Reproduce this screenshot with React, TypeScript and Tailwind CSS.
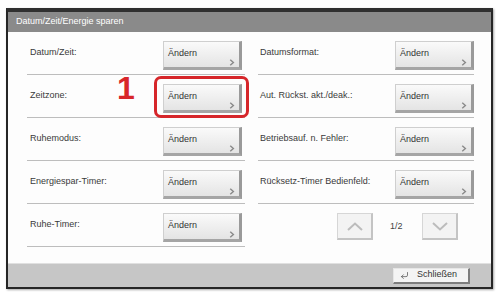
import { CornerDownLeft } from 'lucide-react';

const leftRows = ['Datum/Zeit:', 'Zeitzone:', 'Ruhemodus:', 'Energiespar-Timer:', 'Ruhe-Timer:'];
const rightRows = ['Datumsformat:', 'Aut. Rückst. akt./deak.:', 'Betriebsauf. n. Fehler:', 'Rücksetz-Timer Bedienfeld:'];

function ChangeButton() {
    return (
        <div className="flex h-[29px] w-[79px] flex-col justify-between border border-[#cfcfcf] border-r-[3px] border-b-[3px] border-r-[#9a9a9a] border-b-[#a5a5a5] bg-gradient-to-b from-[#fafafa] to-[#e4e4e4] pb-[1px] pl-[4px] pr-[3px] pt-[6px]">
            <span className="text-[9px] leading-[11px] text-[#333]">Ändern</span>
            <svg width="8" height="10" viewBox="0 0 8 10" className="self-end">
                <polyline points="1.5,1 6,5 1.5,9" fill="none" stroke="#8a8a8a" strokeWidth="2" />
            </svg>
        </div>
    );
}

function Row({ label, padLabel, btnMargin }: { label: string; padLabel: string; btnMargin: string }) {
    return (
        <div className="mb-[9px] flex h-[34px] items-start justify-between border-b border-[#bdbdbd]">
            <span className={`${padLabel} pt-[6px] text-[9px] leading-[11px] text-[#3a3a3a]`}>{label}</span>
            <div className={btnMargin}>
                <ChangeButton />
            </div>
        </div>
    );
}

function PageButton({ up }: { up: boolean }) {
    return (
        <div className="flex h-[27px] w-[36px] items-center justify-center border border-[#d6d6d6] border-b-2 border-r-2 border-b-[#c4c4c4] border-r-[#c4c4c4] bg-[#f3f3f3]">
            <svg width="16" height="9" viewBox="0 0 16 9">
                <polyline
                    points={up ? '1,8 8,1.5 15,8' : '1,1 8,7.5 15,1'}
                    fill="none"
                    stroke="#bcbcbc"
                    strokeWidth="2"
                />
            </svg>
        </div>
    );
}

export default function App() {
    return (
        <div className="relative h-[295px] w-[501px] bg-white pl-[6px] pt-[8px] font-['Liberation_Sans',Arial,sans-serif]">
            <div className="w-[487px] border-2 border-t-[4px] border-[#262626] border-t-[#303030] shadow-[1px_1px_2px_rgba(0,0,0,0.35)]">
                {/* title bar */}
                <div className="flex h-[20px] items-center bg-[#8a8a8a] pl-[8px] text-[9px] text-white">
                    Datum/Zeit/Energie sparen
                </div>

                {/* settings */}
                <div className="flex h-[231px] gap-[13px] bg-[#fdfdfd] pl-[19px] pr-[17px] pt-[9px]">
                    <div className="w-[218px]">
                        {leftRows.map((l) => (
                            <Row key={l} label={l} padLabel="pl-[3px]" btnMargin="mr-[3px]" />
                        ))}
                    </div>
                    <div className="w-[216px]">
                        {rightRows.map((l) => (
                            <Row key={l} label={l} padLabel="pl-[2px]" btnMargin="" />
                        ))}
                        <div className="ml-[79px] mt-[5px] flex items-center">
                            <PageButton up />
                            <span className="ml-[17px] w-[32px] text-[9px] text-[#444]">1/2</span>
                            <PageButton up={false} />
                        </div>
                    </div>
                </div>

                {/* footer */}
                <div className="flex h-[24px] items-center justify-end border-t border-[#e0e0e0] bg-[#c6c6c6] pr-[21px]">
                    <div className="flex h-[16px] w-[77px] items-center border border-[#e6e6e6] border-b-2 border-r-2 border-b-[#7d7d7d] border-r-[#7d7d7d] bg-[#f4f4f4] pl-[6px]">
                        <CornerDownLeft className="h-[9px] w-[9px] text-[#555]" strokeWidth={2} />
                        <span className="ml-[8px] text-[9px] text-[#333]">Schließen</span>
                    </div>
                </div>
            </div>

            {/* annotation */}
            <span className="absolute left-[117px] top-[72px] text-[32px] font-bold leading-[32px] text-[#d8262a]">1</span>
            <div className="absolute left-[154px] top-[76px] h-[42px] w-[95px] rounded-[7px] border-[3px] border-[#d6262a]" />
        </div>
    );
}
